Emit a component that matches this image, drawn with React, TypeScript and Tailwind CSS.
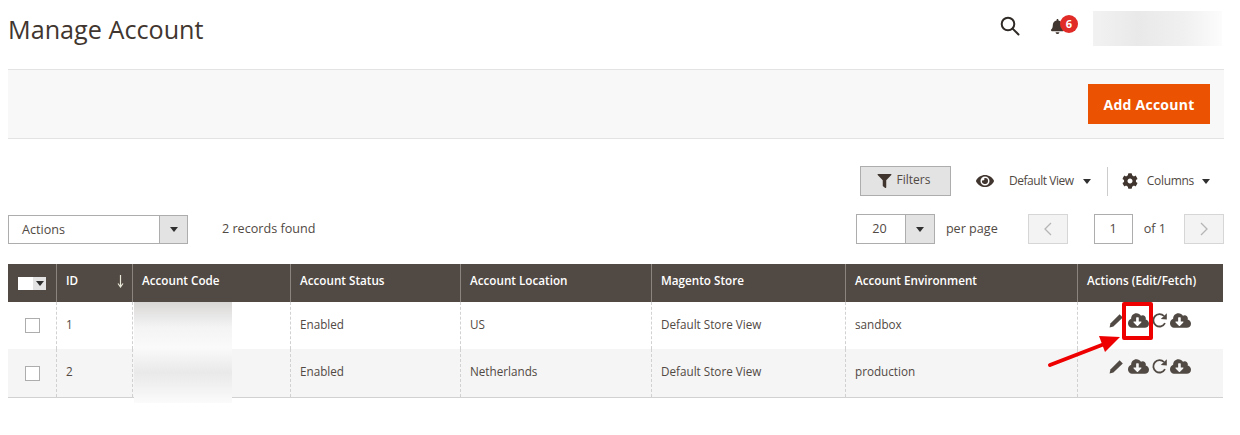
import React from "react";
import { FaCloudDownloadAlt, FaCog, FaEye, FaFilter, FaBell } from "react-icons/fa";

const Caret = ({ className = "" }: { className?: string }) => (
  <span className={`inline-block w-0 h-0 border-x-[4px] border-x-transparent border-t-[5px] border-t-[#303030] ${className}`} />
);

const widths = ["w-[49px]", "w-[76px]", "w-[158px]", "w-[170px]", "w-[191px]", "w-[194px]", "w-[232px]", "w-[145px]"];
const headers = ["ID", "Account Code", "Account Status", "Account Location", "Magento Store", "Account Environment", "Actions (Edit/Fetch)"];
const rows = [
  { id: "1", loc: "US", env: "sandbox", bg: "bg-white", h: "h-[47px]", pt: "pt-[10px]" },
  { id: "2", loc: "Netherlands", env: "production", bg: "bg-[#f5f5f5]", h: "h-[48px]", pt: "pt-[9px]" },
];

const Icons = () => (
  <div className="flex items-center justify-center gap-[2px] text-[#514943] h-[16px]">
    <svg className="w-[15px] h-[15px] mr-[2px]" viewBox="0 0 15 15" fill="currentColor">
      <path d="M10.6 1.2 L13.8 4.4 L4.4 13.6 L0.6 14.4 L1.4 10.5 Z" />
    </svg>
    <FaCloudDownloadAlt className="w-[21px] h-[17px]" />
    <svg className="w-[17px] h-[17px]" viewBox="0 0 17 17" fill="none">
      <path d="M14 11.2 A6.2 6.2 0 1 1 13 4" stroke="currentColor" strokeWidth="1.8" />
      <path d="M15.8 1.2 L15.8 7.4 L9.8 7 Z" fill="currentColor" />
    </svg>
    <FaCloudDownloadAlt className="w-[21px] h-[17px]" />
  </div>
);

export default function App() {
  return (
    <div className="relative w-[1240px] h-[435px] bg-white overflow-hidden text-[11.7px] text-[#514943] [font-family:'Open_Sans',sans-serif]">
      <header className="flex items-start justify-between h-[69px] pl-[8px] pr-[18px]">
        <h1 className="text-[25.2px] leading-[34px] mt-[12px] text-[#41362f]">Manage Account</h1>
        <div className="flex items-start">
          <svg className="w-[20px] h-[20px] mt-[16px]" viewBox="0 0 20 20" fill="none" stroke="#2f2a26" strokeWidth="2">
            <circle cx="8" cy="8" r="6.3" />
            <path d="M12.6 12.6 L18.5 18.5" strokeLinecap="round" />
          </svg>
          <div className="relative w-[30px] h-[30px] ml-[30px] mt-[15px]">
            <FaBell className="w-[15px] h-[15px] mt-[4px] text-[#41362f]" />
            <span className="absolute left-[10px] top-0 w-[18px] h-[18px] rounded-full bg-[#e02b27] text-white text-[11px] leading-[18px] font-bold text-center">6</span>
          </div>
          <div className="w-[129px] h-[35px] mt-[11px] ml-[13px] bg-[linear-gradient(90deg,#f2f2f2,#e9e9e9_35%,#f0f0f0_70%,#fcfcfc)]" />
        </div>
      </header>

      <div className="flex justify-end items-center w-[1216px] h-[70px] ml-[8px] pr-[14px] bg-[#f8f8f8] border-y border-[#e3e3e3]">
        <button className="w-[122px] h-[40px] bg-[#eb5202] text-white text-[14px] font-bold tracking-[0.25px]">Add Account</button>
      </div>

      <div className="flex items-center justify-end h-[30px] mt-[27px] pr-[30px]">
        <button className="flex items-center justify-center gap-[5px] w-[91px] h-[30px] mr-[25px] bg-[#e3e3e3] border border-[#adadad] text-[12px] text-[#514943] font-medium">
          <FaFilter className="w-[15px] h-[14px] text-[#41362f] -ml-[4px]" />
          <span className="-mt-[2px]">Filters</span>
        </button>
        <FaEye className="w-[22px] h-[16px] text-[#41362f] -ml-[2px] mr-[2px]" />
        <span className="ml-[11px] text-[12px] tracking-[-0.45px]">Default View</span>
        <Caret className="ml-[9px]" />
        <div className="w-px h-[29px] bg-[#cccccc] ml-[16px] mr-[14px]" />
        <FaCog className="w-[16px] h-[16px] text-[#41362f]" />
        <span className="ml-[9px] text-[12px] tracking-[-0.3px]">Columns</span>
        <Caret className="ml-[8px]" />
      </div>

      <div className="flex items-center h-[30px] mt-[18px] pl-[8px] pr-[16px] text-[12.6px]">
        <div className="flex w-[180px] h-[29px] border border-[#adadad]">
          <span className="flex-1 pl-[13px] leading-[27px]">Actions</span>
          <span className="flex items-center justify-center w-[28px] bg-[#e3e3e3] border-l border-[#adadad]"><Caret /></span>
        </div>
        <span className="ml-[34px]">2 records found</span>
        <div className="flex w-[79px] h-[30px] ml-auto border border-[#adadad]">
          <span className="flex-1 text-center leading-[28px] pr-[3px]">20</span>
          <span className="flex items-center justify-center w-[29px] bg-[#e3e3e3] border-l border-[#adadad]"><Caret /></span>
        </div>
        <span className="ml-[11px]">per page</span>
        <span className="flex items-center justify-center w-[40px] h-[30px] ml-[30px] bg-[#f3f3f3] border border-[#d6d6d6] text-[#b5b5b5]">
          <svg className="w-[10px] h-[14px]" viewBox="0 0 10 14" fill="none" stroke="currentColor" strokeWidth="1.3"><path d="M8 1 L2 7 L8 13" /></svg>
        </span>
        <span className="w-[39px] h-[30px] ml-[26px] border border-[#adadad] text-center leading-[28px]">1</span>
        <span className="ml-[11px]">of 1</span>
        <span className="flex items-center justify-center w-[40px] h-[30px] ml-[18px] bg-[#f3f3f3] border border-[#d6d6d6] text-[#b5b5b5]">
          <svg className="w-[10px] h-[14px]" viewBox="0 0 10 14" fill="none" stroke="currentColor" strokeWidth="1.3"><path d="M2 1 L8 7 L2 13" /></svg>
        </span>
      </div>

      <div className="mt-[20px] mx-[8px] w-[1215px] border-b border-[#d1d1d1]">
        <div className="flex h-[38px] bg-[#514943] text-white font-semibold">
          <div className={`${widths[0]} shrink-0 flex items-center pl-[10px] border-r border-[#8a837e]`}>
            <span className="w-[15px] h-[13px] bg-white" />
            <span className="flex items-center justify-center w-[13px] h-[13px] bg-[#e3e3e3]"><Caret /></span>
          </div>
          {headers.map((h, i) => (
            <div key={h} className={`${widths[i + 1]} shrink-0 relative pl-[9px] pt-[8px] leading-[17px] ${i < 6 ? "border-r border-[#8a837e]" : ""}`}>
              {h}
              {i === 0 && (
                <svg className="absolute right-[8px] top-[11px] w-[7px] h-[13px]" viewBox="0 0 7 13" fill="none" stroke="#e8e8d8" strokeWidth="1.2">
                  <path d="M3.5 0 L3.5 11 M1 8.5 L3.5 12 L6 8.5" />
                </svg>
              )}
            </div>
          ))}
        </div>
        {rows.map((r) => (
          <div key={r.id} className={`flex ${r.h} ${r.bg}`}>
            <div className={`${widths[0]} shrink-0 flex items-center pl-[17px] border-r border-dashed border-[#d1d1d1]`}>
              <span className="w-[15px] h-[15px] bg-white border border-[#adadad]" />
            </div>
            {[r.id, "", "Enabled", r.loc, "Default Store View", r.env].map((c, i) => (
              <div key={i} className={`${widths[i + 1]} shrink-0 pl-[9px] pt-[14px] leading-[17px] border-r border-dashed border-[#d1d1d1]`}>{c}</div>
            ))}
            <div className={`${widths[7]} shrink-0 ${r.pt} pr-[2px]`}><Icons /></div>
          </div>
        ))}
      </div>

      <div className="absolute left-[134px] top-[302px] w-[98px] h-[101px] bg-[linear-gradient(180deg,#d9d7d6_0%,#f4f4f4_25%,#fafafa_45%,#e9e9e9_70%,#fbfbfb_100%)]" />

      <div className="absolute left-[1122px] top-[302px] w-[31px] h-[38px] border-[4px] border-[#ee0000] rounded-[2px]" />
      <svg className="absolute left-[1045px] top-[330px] w-[80px] h-[40px]" viewBox="0 0 80 40">
        <path d="M5 35 L62 13" stroke="#ee0000" strokeWidth="4" strokeLinecap="round" />
        <path d="M75 7 L54 6 L60 22 Z" fill="#ee0000" />
      </svg>
    </div>
  );
}
